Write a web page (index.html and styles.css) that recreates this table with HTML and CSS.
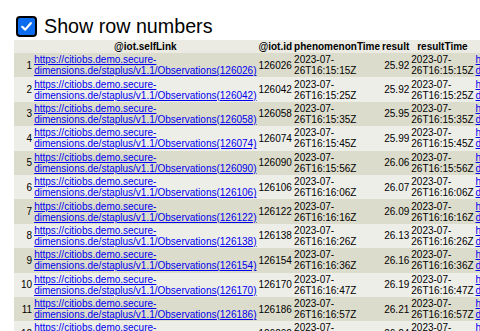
FILE: index.html
```html
<!DOCTYPE html>
<html>
<head>
<meta charset="utf-8">
<link rel="stylesheet" href="styles.css">
</head>
<body>
<div class="page">
  <label class="toggle">
    <span class="box"><svg width="13" height="13" viewBox="0 0 13 13"><path d="M2.2 6.8 L5.2 9.6 L10.8 3.2" fill="none" stroke="#fff" stroke-width="2.2" stroke-linecap="round" stroke-linejoin="round"/></svg></span>
    <span class="label-text">Show row numbers</span>
  </label>
  <table class="grid">
    <thead>
      <tr class="head"><th class="num"></th><th>@iot.selfLink</th><th>@iot.id</th><th>phenomenonTime</th><th>result</th><th>resultTime</th><th>Datastream@iot.navigationLink</th></tr>
    </thead>
    <tbody id="rows"></tbody>
  </table>
</div>
<script>
var times=["15:15","15:25","15:35","15:45","15:56","16:06","16:16","16:26","16:36","16:47","16:57","17:07"];
var res=["25.92","25.92","25.95","25.99","26.06","26.07","26.09","26.13","26.16","26.19","26.21","26.24"];
var html="";
for(var i=0;i<12;i++){
  var id=126026+16*i;
  var t="2023-07-26T16:"+times[i]+"Z";
  var url="https://citiobs.demo.secure-dimensions.de/staplus/v1.1/Observations("+id+")";
  html+='<tr><td class="num">'+(i+1)+'</td><td><a href="#">'+url+'</a></td><td>'+id+'</td><td>'+t+'</td><td class="res">'+res[i]+'</td><td>'+t+'</td><td><a href="#">'+url+'/Datastream</a></td></tr>';
}
document.getElementById("rows").innerHTML=html;
</script>
</body>
</html>
```
FILE: styles.css
```css
html { overflow: hidden; }
body { margin: 0; font-family: "Liberation Sans", Arial, sans-serif; color: #000; }
.page { padding: 15px 0 0 14px; }
.toggle { display: flex; align-items: center; gap: 7px; margin-left: 2px; height: 23px; }
.box { width: 17px; height: 17px; border: 2px solid #000; border-radius: 4px; background: #0b6cf0; display: flex; align-items: center; justify-content: center; }
.label-text { font-size: 19.7px; line-height: 23px; }
.grid { border-collapse: collapse; font-size: 10px; line-height: 11px; margin-top: 2px; }
.grid th, .grid td { padding: 0 1px; vertical-align: middle; }
.grid tr { height: 24.4px; }
.grid tr.head { height: 13px; }
.grid th { background: #ebebe4; font-weight: bold; text-align: center; white-space: nowrap; }
.grid td { text-align: left; }
.grid .num { padding-left: 7px; }
.grid td.num, .grid td.res { text-align: right; }
.grid tbody tr:nth-child(odd) td { background: #dcdccc; }
.grid tbody tr:nth-child(even) td { background: #eeeee9; }
.grid a { color: #0000ee; }
```
